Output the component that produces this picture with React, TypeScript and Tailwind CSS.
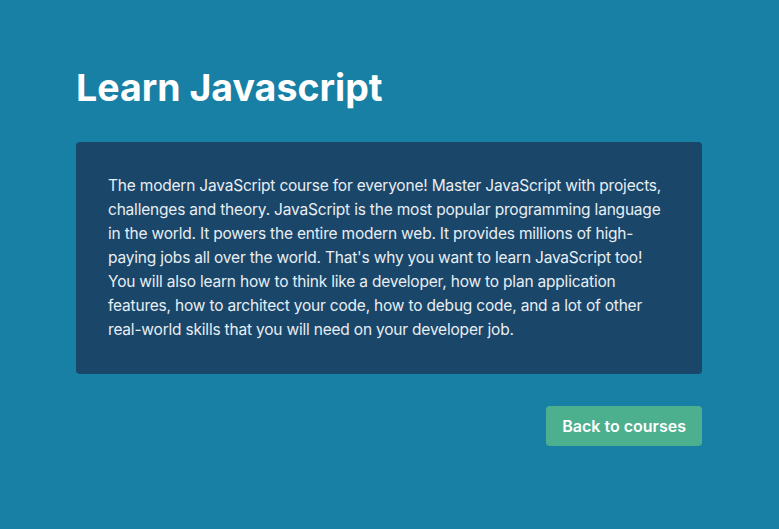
export default function App() {
  return (
    <div
      className="min-h-screen w-full bg-[#1880a5] text-white"
      style={{ fontFamily: 'Inter, "Noto Sans", sans-serif' }}
    >
      <div className="ml-[76px] w-[626px] pt-[68px]">
        <h1 className="text-[37.5px] font-bold leading-10">Learn Javascript</h1>

        {/* Course description */}
        <div className="mt-[34px] rounded bg-[#1a4669] px-8 py-8">
          <p className="text-[15.5px] leading-6 tracking-[-0.2px] text-[#e8eef3]">
            The modern JavaScript course for everyone! Master JavaScript with projects,
            challenges and theory. JavaScript is the most popular programming language
            in the world. It powers the entire modern web. It provides millions of high-paying
            jobs all over the world. That's why you want to learn JavaScript too! You will
            also learn how to think like a developer, how to plan application features, how
            to architect your code, how to debug code, and a lot of other real-world skills
            that you will need on your developer job.
          </p>
        </div>

        <div className="mt-8 flex justify-end">
          <button className="h-10 rounded bg-[#4caf8d] px-4 text-base font-semibold text-white">
            Back to courses
          </button>
        </div>
      </div>
    </div>
  );
}
